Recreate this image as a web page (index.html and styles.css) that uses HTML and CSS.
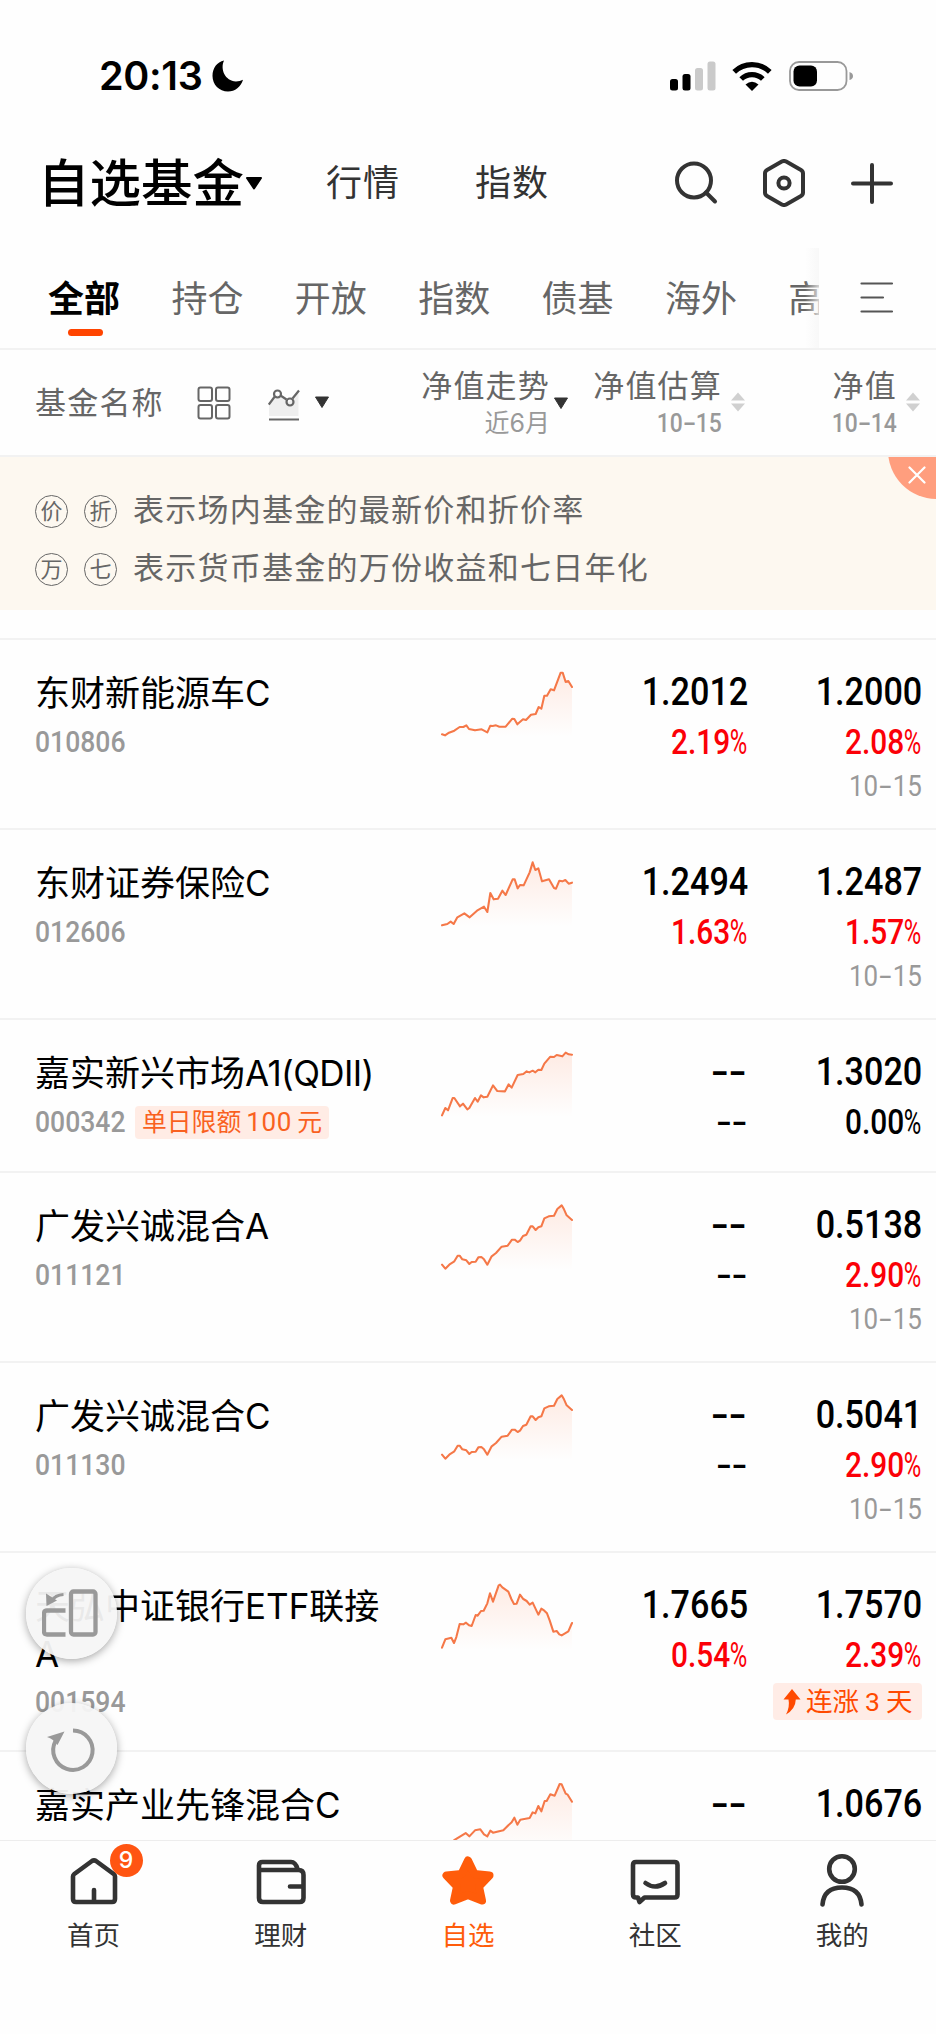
FILE: index.html
```html
<!DOCTYPE html>
<html lang="zh-CN">
<head>
<meta charset="utf-8">
<title>自选基金</title>
<link rel="stylesheet" href="styles.css">
</head>
<body>
<svg class="defs" width="0" height="0">
  <defs>
    <linearGradient id="fade" x1="0" y1="0" x2="0" y2="1">
      <stop offset="0" stop-color="#ff6a33" stop-opacity=".13"/>
      <stop offset="1" stop-color="#ff6a33" stop-opacity="0"/>
    </linearGradient>
  </defs>
</svg>
<div class="app">
  <div class="status">
    <div class="clock">20:13</div>
    <svg class="moon" width="32" height="32" viewBox="0 0 32 32"><path d="M12 .5C8 9 13 21 24 21.500Q28 21.500 31 19.800C29 27 23 31.500 16 31.500C7 31.500 .5 24.500 .5 16C.5 8 5 2 12 .5Z"/></svg>
    <svg class="signal" width="46" height="30" viewBox="0 0 46 30"><rect x="0" y="18" width="8" height="11.500" rx="2.500"/><rect x="12.500" y="13" width="8" height="16.500" rx="2.500"/><rect x="25" y="7" width="8" height="22.500" rx="2.500" fill="#cacaca"/><rect x="37.500" y="0.500" width="8" height="29" rx="2.500" fill="#cacaca"/></svg>
    <svg class="wifi" width="40" height="30" viewBox="0 0 40 30"><path d="M2.200 10.800A25.500 25.500 0 0 1 37.800 10.800M9.200 18A15.500 15.500 0 0 1 30.800 18" fill="none" stroke="#000" stroke-width="5.200"/><path d="M13.500 23.500Q20 18 26.500 23.500L20 30Z"/></svg>
    <svg class="battery" width="64" height="30" viewBox="0 0 64 30"><rect x="1" y="1" width="56.500" height="28" rx="9" fill="none" stroke="#999" stroke-width="1.800"/><rect x="4.500" y="4.500" width="23.500" height="21" rx="6"/><path d="M60.500 11Q64 12 64 15T60.500 19Z" fill="#999"/></svg>
  </div>

  <header class="head">
    <div class="title">自选基金</div>
    <svg class="title-caret" width="18" height="13" viewBox="0 0 18 13"><path d="M2 1H16L9 11.500Z" stroke="#000" stroke-width="2" stroke-linejoin="round"/></svg>
    <div class="nav nav-market">行情</div>
    <div class="nav nav-index">指数</div>
    <div class="tools">
      <svg width="44" height="48" viewBox="0 0 44 48" class="line"><circle cx="20" cy="21.500" r="17"/><path d="M32 33.500L41 42.500"/></svg>
      <svg width="44" height="48" viewBox="0 0 44 48" class="line"><path d="M19.800 2.600Q22 1.400 24.200 2.600L39 10.900Q41 12 41 14.400V33.600Q41 36 39 37.100L24.200 45.400Q22 46.600 19.800 45.400L5 37.100Q3 36 3 33.600V14.400Q3 12 5 10.900Z"/><circle cx="22" cy="24" r="5.600"/></svg>
      <svg width="44" height="48" viewBox="0 0 44 48" class="line"><path d="M3 24.500H41M22 6V43"/></svg>
    </div>
  </header>

  <div class="tabs">
    <div class="tab-strip">
      <div class="tab on">全部</div><div class="tab">持仓</div><div class="tab">开放</div><div class="tab">指数</div><div class="tab">债基</div><div class="tab">海外</div><div class="tab">高</div>
    </div>
    <div class="tab-more"><svg width="34" height="32" viewBox="0 0 34 32"><path d="M1.500 1.500H32M1.500 15.500H23M1.500 29.500H32" stroke="#555" stroke-width="2.200" stroke-linecap="round"/></svg></div>
  </div>

  <div class="cols">
    <div class="col-name">
      <span>基金名称</span>
      <svg class="ic-grid" width="34" height="34" viewBox="0 0 34 34"><g fill="none" stroke="#666" stroke-width="2"><rect x="1.500" y="1.500" width="13.500" height="13.500" rx="2"/><rect x="19" y="1.500" width="13.500" height="13.500" rx="2"/><rect x="1.500" y="19" width="13.500" height="13.500" rx="2"/><rect x="19" y="19" width="13.500" height="13.500" rx="2"/></g></svg>
      <svg class="ic-trend" width="32" height="32" viewBox="0 0 32 32"><path d="M1 14L9 6L21 13L30.500 4V27H1Z" fill="#efefef"/><g fill="none" stroke="#666" stroke-width="2.200"><path d="M.8 15.500L6.800 7.500M12.500 6.500L18.500 10.500M24.500 9.500L31 1.500M1 30.500H31"/><circle cx="9.500" cy="5" r="3.500"/><circle cx="22" cy="13" r="3.500"/></g></svg>
      <svg class="caret" width="16" height="13" viewBox="0 0 16 13"><path d="M1.500 1H14.500L8 11.500Z" fill="#333" stroke="#333" stroke-linejoin="round"/></svg>
    </div>
    <div class="col c-trend">
      <div class="labels"><div>净值走势</div><div class="sub">近6月</div></div>
      <svg class="caret" width="16" height="13" viewBox="0 0 16 13"><path d="M1.500 1H14.500L8 11.500Z" fill="#333" stroke="#333" stroke-linejoin="round"/></svg>
    </div>
    <div class="col c-est">
      <div class="labels"><div>净值估算</div><div class="sub"><span class="n">10<u>-</u>15</span></div></div>
      <svg class="sort" width="16" height="20" viewBox="0 0 16 20"><path d="M8 .5L15 8.500H1ZM1 11.500H15L8 19.500Z" fill="#d0d0d0"/></svg>
    </div>
    <div class="col c-nav">
      <div class="labels"><div>净值</div><div class="sub"><span class="n">10<u>-</u>14</span></div></div>
      <svg class="sort" width="16" height="20" viewBox="0 0 16 20"><path d="M8 .5L15 8.500H1ZM1 11.500H15L8 19.500Z" fill="#d0d0d0"/></svg>
    </div>
  </div>

  <div class="notice">
    <div class="note"><i>价</i><i>折</i><span>表示场内基金的最新价和折价率</span></div>
    <div class="note"><i>万</i><i>七</i><span>表示货币基金的万份收益和七日年化</span></div>
    <div class="close"><svg width="18" height="18" viewBox="0 0 18 18"><path d="M1.500 1.500L16.500 16.500M16.500 1.500L1.500 16.500" stroke="#fff" stroke-width="2.200" stroke-linecap="round"/></svg></div>
  </div>

  <main class="list">
    <div class="row">
      <div class="fund"><div class="name">东财新能源车C</div><div class="meta"><span class="code">010806</span></div></div>
      <svg class="spark" viewBox="60 90 405 203"><path class="area" d="M66 283L75 286L87 278L103 272L119 261L130 261L139 256L147 267L165 271L185 268L202 277L211 257L228 256L238 260L257 260L277 236L283 237L292 253L309 238L318 240L333 224L347 222L356 201L364 206L373 167L381 167L392 148L402 151L426 97L437 126L445 123L456 141V290H66Z"/><polyline points="66,283 75,286 87,278 103,272 119,261 130,261 139,256 147,267 165,271 185,268 202,277 211,257 218,258 228,256 238,260 257,260 277,236 283,237 292,253 309,238 318,240 333,224 347,222 356,201 364,206 373,167 381,167 392,148 402,151 422,98 428,98 437,126 445,123 456,141"/></svg>
      <div class="vals"><div class="v n">1.2012</div><div class="p up n">2.19<b>%</b></div></div>
      <div class="vals"><div class="v n">1.2000</div><div class="p up n">2.08<b>%</b></div><div class="d n">10<u>-</u>15</div></div>
    </div>
    <div class="row">
      <div class="fund"><div class="name">东财证券保险C</div><div class="meta"><span class="code">012606</span></div></div>
      <svg class="spark" viewBox="60 660 405 203"><path class="area" d="M66 856L82 852L92 845L101 852L112 832L133 820L149 832L171 812L192 800L202 816L211 759L221 778L234 776L247 752L257 765L282 717L293 745L300 735L311 736L329 697L338 667L346 690L355 685L366 724L387 718L406 747L418 722L427 724L436 720L446 731L456 728V860H66Z"/><polyline points="66,856 82,852 92,845 101,852 112,832 133,820 149,832 171,812 192,800 202,816 211,759 221,778 234,776 247,752 257,765 278,718 284,718 293,745 300,735 311,736 329,697 338,667 346,690 355,685 366,724 387,718 402,744 408,746 418,722 427,724 436,720 446,731 456,728"/></svg>
      <div class="vals"><div class="v n">1.2494</div><div class="p up n">1.63<b>%</b></div></div>
      <div class="vals"><div class="v n">1.2487</div><div class="p up n">1.57<b>%</b></div><div class="d n">10<u>-</u>15</div></div>
    </div>
    <div class="row short">
      <div class="fund"><div class="name">嘉实新兴市场<em>A1(QDII)</em></div><div class="meta"><span class="code">000342</span><span class="tag">单日限额<em>100</em>元</span></div></div>
      <svg class="spark" viewBox="60 149 405 203"><path class="area" d="M66 345L76 323L84 330L101 292L120 318L129 310L142 327L165 293L173 304L183 285L202 289L219 255L234 273L255 273L266 252L275 262L293 224L310 221L346 216L364 209L373 190L391 169L427 168L437 157L456 163V350H66Z"/><polyline points="66,345 76,323 84,330 98,293 103,293 120,318 129,310 142,327 148,323 165,293 173,304 183,285 191,291 202,289 219,255 232,272 255,273 266,252 275,262 293,224 310,221 320,213 328,216 338,211 346,216 355,208 364,209 373,190 391,169 402,170 410,164 427,168 437,157 446,162 456,163"/></svg>
      <div class="vals"><div class="v dash">--</div><div class="p dash">--</div></div>
      <div class="vals"><div class="v n">1.3020</div><div class="p n">0.00<b>%</b></div></div>
    </div>
    <div class="row">
      <div class="fund"><div class="name">广发兴诚混合A</div><div class="meta"><span class="code">011121</span></div></div>
      <svg class="spark" viewBox="60 607 405 203"><path class="area" d="M66 792L76 804L103 782L116 764L139 779L148 790L167 783L175 770L184 769L202 792L215 767L245 738L263 735L276 717L293 724L309 706L319 702L335 676L347 688L364 677L373 653L400 645L425 614L440 644L456 658V808H66Z"/><polyline points="66,792 76,804 90,790 103,782 113,765 119,765 127,776 139,779 148,790 155,784 167,783 175,770 184,769 192,776 202,792 215,767 228,757 245,738 263,735 276,717 284,717 293,724 300,720 309,706 319,702 332,677 338,677 347,688 355,680 364,677 373,653 386,647 402,645 412,625 425,614 432,626 440,644 456,658"/></svg>
      <div class="vals"><div class="v dash">--</div><div class="p dash">--</div></div>
      <div class="vals"><div class="v n">0.5138</div><div class="p up n">2.90<b>%</b></div><div class="d n">10<u>-</u>15</div></div>
    </div>
    <div class="row">
      <div class="fund"><div class="name">广发兴诚混合C</div><div class="meta"><span class="code">011130</span></div></div>
      <svg class="spark" viewBox="60 607 405 203"><path class="area" d="M66 792L76 804L103 782L116 764L139 779L148 790L167 783L175 770L184 769L202 792L215 767L245 738L263 735L276 717L293 724L309 706L319 702L335 676L347 688L364 677L373 653L400 645L425 614L440 644L456 658V808H66Z"/><polyline points="66,792 76,804 90,790 103,782 113,765 119,765 127,776 139,779 148,790 155,784 167,783 175,770 184,769 192,776 202,792 215,767 228,757 245,738 263,735 276,717 284,717 293,724 300,720 309,706 319,702 332,677 338,677 347,688 355,680 364,677 373,653 386,647 402,645 412,625 425,614 432,626 440,644 456,658"/></svg>
      <div class="vals"><div class="v dash">--</div><div class="p dash">--</div></div>
      <div class="vals"><div class="v n">0.5041</div><div class="p up n">2.90<b>%</b></div><div class="d n">10<u>-</u>15</div></div>
    </div>
    <div class="row tall">
      <div class="fund"><div class="name">天弘中证银行ETF联接A</div><div class="meta"><span class="code">001594</span></div></div>
      <svg class="spark" viewBox="60 128 405 203"><path class="area" d="M66 322L76 297L94 292L102 308L119 251L138 247L155 257L167 224L191 211L202 189L210 159L219 184L238 133L265 154L284 193L300 163L329 193L338 187L355 223L364 205L381 219L400 274L425 285L445 273L456 248V328H66Z"/><polyline points="66,322 76,297 94,292 102,308 109,290 119,251 130,252 138,247 147,255 155,257 167,224 173,226 183,212 191,211 202,189 210,159 219,184 236,135 240,133 247,141 265,154 274,176 282,191 290,190 300,163 310,176 320,182 329,193 338,187 355,223 364,205 373,211 381,219 389,240 400,274 410,272 418,282 425,285 445,273 456,248"/></svg>
      <div class="vals"><div class="v n">1.7665</div><div class="p up n">0.54<b>%</b></div></div>
      <div class="vals"><div class="v n">1.7570</div><div class="p up n">2.39<b>%</b></div>
        <div class="streak"><svg width="18" height="26" viewBox="0 0 18 26"><path d="M9 0L17.500 10.500H12.800Q12.500 20 3 25.500Q7 18 5.500 10.500H.5Z" fill="#ff4a00"/></svg><span>连涨<em>3</em>天</span></div>
      </div>
    </div>
    <div class="row">
      <div class="fund"><div class="name">嘉实产业先锋混合C</div></div>
      <svg class="spark" viewBox="60 725 405 203"><path class="area" d="M66 920L105 898L137 878L148 888L165 870L181 867L202 888L211 871L250 870L283 832L292 853L329 833L355 797L364 813L374 782L391 762L404 766L422 730L437 760L456 784V928H66Z"/><polyline points="66,925 105,898 137,878 148,888 165,870 181,867 192,882 202,888 211,871 219,877 250,870 265,855 275,846 283,832 292,853 301,838 329,833 338,816 346,819 355,797 364,813 374,782 380,782 391,762 404,766 419,731 425,732 437,760 443,763 456,784"/></svg>
      <div class="vals"><div class="v dash">--</div></div>
      <div class="vals"><div class="v n">1.0676</div></div>
    </div>
  </main>

  <nav class="bar">
    <div class="item"><div class="icon"><svg width="56" height="56" viewBox="0 0 56 56" class="tab-ic"><path d="M7 23.500Q7 22 8.300 21L26 8Q28 6.600 30 8L47.700 21Q49 22 49 23.500V46Q49 49 46 49H10Q7 49 7 46ZM28 37V48"/></svg><div class="badge">9</div></div><span>首页</span></div>
    <div class="item"><div class="icon"><svg width="56" height="56" viewBox="0 0 56 56" class="tab-ic"><path d="M6 17V45Q6 49 10 49H46.500Q50.500 49 50.500 45V22Q50.500 17 45.500 17H6ZM6 17V12.500Q6 9 9.500 9H38Q42.500 9 44.500 16M50 33.500H37"/></svg></div><span>理财</span></div>
    <div class="item active"><div class="icon"><svg width="56" height="56" viewBox="0 0 56 56"><path d="M28 7L34.500 20.500L49.500 22L39 33L42 47L28 41.500L14 47L17 33L6.500 22L21.500 20.500Z" transform="translate(0 .5)" fill="#ff5c0a" stroke="#ff5c0a" stroke-width="8" stroke-linejoin="round"/></svg></div><span>自选</span></div>
    <div class="item"><div class="icon"><svg width="56" height="56" viewBox="0 0 56 56" class="tab-ic"><path d="M9 9H47.500Q50.500 9 50.500 12V41.500Q50.500 44.500 47.500 44.500H17.500L12.500 49L11 44.500H9Q6 44.500 6 41.500V12Q6 9 9 9ZM18.500 30Q28 37 38 30"/></svg></div><span>社区</span></div>
    <div class="item"><div class="icon"><svg width="56" height="56" viewBox="0 0 56 56" class="tab-ic"><circle cx="28" cy="16" r="12.800"/><path d="M8.500 51.500Q10 34.500 28 34.500T47.500 51.500"/></svg></div><span>我的</span></div>
  </nav>

  <div class="float float-split"><svg width="60" height="54" viewBox="0 0 60 54"><g fill="none" stroke="#999" stroke-width="4.300"><rect x="29" y="4.500" width="24.500" height="43" rx="2.500"/><path d="M23.500 23.500H5Q2 23.500 2 26.500V44.500Q2 47.500 5 47.500H23.500"/><path d="M21.500 7.500Q13 8 9.500 14" stroke-width="3.200"/></g><path d="M4 6.500L15 13.500L4.500 19Z" fill="#999"/></svg></div>
  <div class="float float-reload"><svg width="60" height="54" viewBox="0 0 60 54"><path d="M31 8.500A19.700 19.700 0 1 1 13.500 19" fill="none" stroke="#999" stroke-width="4"/><path d="M5 15L22.500 9.500L15.500 23Q11.500 17 5 15Z" fill="#999"/></svg></div>
</div>
</body>
</html>
```

FILE: styles.css
```css
* { box-sizing: border-box; }
body { margin: 0; background: #fefefe; }
svg { display: block; flex: none; }
em, i, b { font-style: normal; font-weight: inherit; }
.defs { position: absolute; }

.app {
  position: relative;
  display: flex;
  flex-direction: column;
  width: 936px;
  height: 2034px;
  overflow: hidden;
  background: #fefefe;
  color: #000;
  font-family: Inter, "Noto Sans CJK SC", sans-serif;
}

/* Status bar */
.status { display: flex; align-items: center; height: 152px; padding-left: 99px; flex: none; }
.clock { width: 113px; font-size: 39.5px; font-weight: 600; line-height: 46px; letter-spacing: -0.3px; }
.signal { margin-left: 426px; }
.wifi { margin-left: 16px; }
.battery { margin-left: 17px; }

/* Title row */
.head { display: flex; align-items: center; height: 62px; padding-left: 38px; flex: none; }
.title { width: 207px; font-size: 51.5px; font-weight: 500; line-height: 62px; white-space: nowrap; }
.nav { font-size: 36px; letter-spacing: 1px; line-height: 50px; color: #333; }
.nav-market { margin-left: 63px; width: 149px; }
.nav-index { width: 199px; }
.tools { display: flex; gap: 44px; }
.line { fill: none; stroke: #333; stroke-width: 4; stroke-linecap: round; stroke-linejoin: round; }

/* Category tabs */
.tabs { display: flex; height: 136px; border-bottom: 2px solid #f2f2f2; flex: none; }
.tab-strip {
  position: relative;
  display: flex;
  width: 819px;
  padding: 61px 0 0 48px;
  overflow: hidden;
  flex: none;
}
.tab-strip::after {
  content: "";
  position: absolute;
  right: 0;
  top: 34px;
  width: 14px;
  height: 100px;
  background: linear-gradient(90deg, rgba(255,255,255,0), rgba(246,246,246,.75));
}
.tab { width: 123.4px; flex: none; font-size: 36px; line-height: 48px; color: #666; white-space: nowrap; }
.tab.on { color: #000; font-weight: 700; }
.tab.on::after { content: ""; display: block; width: 35px; height: 7px; margin: 6px 0 0 20px; border-radius: 4px; background: #ff4400; }
.tab-more { padding: 68px 0 0 41px; }

/* Column headings */
.cols { display: flex; height: 107px; border-bottom: 2px solid #f2f2f2; color: #666; font-size: 31px; letter-spacing: 1.2px; flex: none; }
.col-name { display: flex; align-items: center; width: 386px; padding-left: 35px; line-height: 40px; flex: none; }
.ic-grid { margin-left: 33px; }
.ic-trend { margin: 5px 0 0 37px; }
.col-name .caret { margin-left: 14px; }
.col { display: flex; justify-content: flex-end; padding-top: 16px; flex: none; }
.labels { text-align: right; line-height: 40px; }
.sub { font-size: 25px; line-height: 35px; color: #999; letter-spacing: 0; }
.sub .n { font-size: 26px; font-weight: 500; line-height: 34px; }
.c-trend { width: 183px; }
.c-est { width: 177px; }
.c-nav { width: 175px; }
.col .caret { margin: 31px 0 0 3px; }
.col .sort { margin: 26px 0 0 8px; }

/* Digits are set slightly condensed */
.n, .code { font-family: Roboto, "Noto Sans CJK SC", sans-serif; display: block; width: max-content; transform: scaleX(.88); transform-origin: right; }
.sub .n { display: inline-block; }
.n u { display: inline-block; width: .56em; text-align: center; text-decoration: none; transform: scaleX(1.7); }

/* Legend */
.notice { position: relative; height: 153px; padding-top: 25px; overflow: hidden; background: #fdf8f0; color: #666; flex: none; }
.note { display: flex; align-items: center; height: 58px; padding-left: 35px; font-size: 31px; letter-spacing: 1.25px; }
.note span { line-height: 40px; padding-bottom: 2px; }
.note i { width: 33px; height: 33px; margin-right: 16px; border: 1.5px solid #666; border-radius: 50%; font-size: 22px; line-height: 30px; letter-spacing: 0; text-align: center; }
.close { position: absolute; left: 888px; top: -55px; width: 97px; height: 97px; border-radius: 50%; background: #ff9e7e; }
.close svg { margin: 64px 0 0 20px; }

/* Fund list */
.list { height: 1230px; padding-top: 28px; overflow: hidden; flex: none; }
.row { display: flex; height: 190px; border-top: 2px solid #f2f2f2; padding: 29px 14px 0 35px; }
.row.short { height: 153px; }
.row.tall { height: 199px; }
.fund { width: 405px; flex: none; }
.name { width: 350px; font-size: 35px; line-height: 48px; white-space: pre-wrap; word-break: break-all; }
.name em { letter-spacing: -.6px; }
.meta { display: flex; align-items: center; height: 33px; margin-top: 9px; }
.tall .meta { margin-top: 8px; }
.code { width: 100px; font-size: 29.5px; font-weight: 500; line-height: 35px; color: #999; transform: scaleX(.9); transform-origin: left; }
.tag { height: 33px; padding: 0 7px; border-radius: 4px; background: #ffece5; color: #f9611f; font-size: 24.8px; line-height: 32px; white-space: nowrap; }
.tag em { margin: 0 5px; font-family: Roboto, sans-serif; font-size: 26px; letter-spacing: .7px; }
.spark { width: 135px; height: 67.7px; margin-top: 1px; }
.spark polyline { fill: none; stroke: #f57848; stroke-width: 6.2; stroke-linejoin: round; stroke-linecap: round; }
.area { fill: url(#fade); }
.vals { display: flex; flex-direction: column; align-items: flex-end; width: 173px; flex: none; }
.vals:last-child { width: 174px; }
.v { font-size: 39.5px; font-weight: 500; line-height: 46px; }
.v.n { transform: scaleX(.865); }
.p { margin-top: 5px; font-size: 34.5px; font-weight: 500; line-height: 44px; }
.p.n { transform: scaleX(.865); }
.p b { display: inline-block; margin-left: -5px; font-weight: 400; transform: scaleX(.8); transform-origin: right; }
.up { color: #fb0007; }
.d { margin-top: 4px; font-size: 29.5px; line-height: 36px; color: #999; }
.dash { padding-right: 1px; font-family: Roboto, sans-serif; transform: scaleX(1.32); transform-origin: right; }
.streak { display: flex; align-items: center; width: 149px; height: 37px; margin-top: 6px; padding-left: 10px; border-radius: 4px; background: #ffece6; color: #ff4a00; font-size: 26.5px; line-height: 36px; white-space: nowrap; }
.streak span { margin-left: 5px; }
.streak em { margin: 0 6px; font-family: Roboto, sans-serif; }

/* Bottom bar */
.bar { display: flex; height: 194px; border-top: 1.5px solid #ededed; background: #fefefe; flex: none; }
.item { display: flex; flex-direction: column; align-items: center; width: 187.2px; padding-top: 12px; color: #333; }
.item span { margin-top: 8px; font-size: 26.5px; line-height: 36px; }
.item.active { color: #ff5c0a; }
.icon { position: relative; }
.tab-ic { fill: none; stroke: #333; stroke-width: 4.6; stroke-linecap: round; stroke-linejoin: round; }
.badge { position: absolute; left: 44px; top: -9px; width: 33px; height: 33px; border-radius: 50%; background: #ff5512; color: #fff; font-size: 23px; font-weight: 500; line-height: 33px; text-align: center; }

/* Floating controls */
.float { position: absolute; left: 26px; display: flex; align-items: center; justify-content: center; width: 91px; height: 91px; border-radius: 50%; background: rgba(246,246,246,.95); box-shadow: 0 2px 8px rgba(0,0,0,.35); }
.float-split { top: 1568px; }
.float-reload { top: 1703px; }
```
